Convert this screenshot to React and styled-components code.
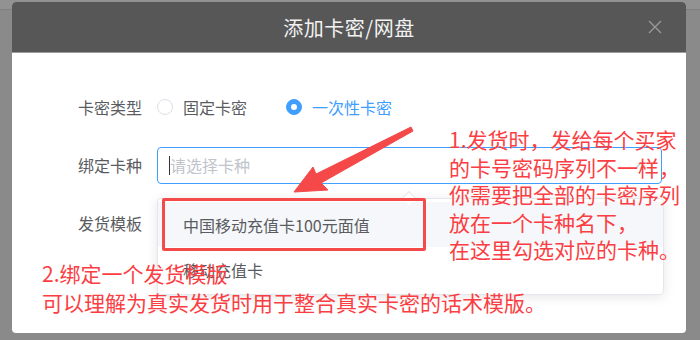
import React from "react";
import styled, { createGlobalStyle } from "styled-components";

const GlobalStyle = createGlobalStyle`
	html, body {
		margin: 0;
		width: 700px;
		height: 340px;
		overflow: hidden;
		background: linear-gradient(#929292 0 9px, #7f7f7f 9px 10px, #8a8a8a 10px);
		font-family: "Noto Sans CJK SC", "Noto Sans", sans-serif;
	}
`;

const Page = styled("div")`
	padding: 2px 14px 0 12px;
`;

const Modal = styled("div")`
	width: 674px;
	height: 331px;
	background: #fff;
	border-radius: 4px;
	overflow: hidden;
	display: flex;
	flex-direction: column;
`;

const Header = styled("div")`
	height: 50px;
	flex: none;
	background: #575757;
	border-bottom: 1px solid #9c9c9c;
	display: grid;
	grid-template-columns: 1fr auto 1fr;
	align-items: center;
`;

const Title = styled("h2")`
	grid-column: 2;
	margin: 0;
	font-size: 20px;
	font-weight: 400;
	color: #f2f2f2;
	letter-spacing: 0.5px;
`;

const Close = styled("span")`
	grid-column: 3;
	justify-self: end;
	margin-right: 24px;
	display: flex;
	color: #9a9a9a;
`;

const Body = styled("div")`
	position: relative;
	flex: 1;
	padding: 34px 24px 0 0;
	display: flex;
	flex-direction: column;
	gap: 18px;
`;

const FormRow = styled("div")`
	display: flex;
	align-items: center;
	height: 40px;
`;

const Label = styled("label")`
	width: 145px;
	flex: none;
	box-sizing: border-box;
	padding-right: 15px;
	text-align: right;
	font-size: 16px;
	color: #5a5c61;
`;

const RadioGroup = styled("div")`
	display: flex;
	align-items: center;
	gap: 39px;
`;

const Radio = styled("span")`
	display: flex;
	align-items: center;
	gap: 10px;
	font-size: 16px;
	color: ${(p) => (p.checked ? "#409eff" : "#5a5c61")};
`;

const Dot = styled("span")`
	width: 16px;
	height: 16px;
	box-sizing: border-box;
	border-radius: 50%;
	border: 1px solid ${(p) => (p.checked ? "#409eff" : "#dcdfe6")};
	background: ${(p) => (p.checked ? "#409eff" : "#fff")};
	display: flex;
	align-items: center;
	justify-content: center;

	&::after {
		content: "";
		width: 6px;
		height: 6px;
		border-radius: 50%;
		background: #fff;
		display: ${(p) => (p.checked ? "block" : "none")};
	}
`;

const SelectBox = styled("div")`
	flex: 1;
	height: 37px;
	box-sizing: border-box;
	border: 1px solid #409eff;
	border-radius: 4px;
	display: flex;
	align-items: center;
	padding: 0 14px 0 11px;
	font-size: 16px;
	color: #c0c4cc;
`;

const Caret = styled("span")`
	width: 1px;
	height: 19px;
	background: #333;
`;

const Placeholder = styled("span")`
	flex: 1;
`;

const Dropdown = styled("ul")`
	position: absolute;
	left: 145px;
	top: 145px;
	width: 507px;
	height: 97px;
	box-sizing: border-box;
	margin: 0;
	padding: 3px 0;
	list-style: none;
	background: #fff;
	border: 1px solid #e4e7ed;
	border-radius: 4px;
	box-shadow: 0 2px 12px rgba(0, 0, 0, 0.1);

	&::before {
		content: "";
		position: absolute;
		top: -6px;
		left: 246px;
		width: 9px;
		height: 9px;
		background: #fff;
		border-left: 1px solid #e4e7ed;
		border-top: 1px solid #e4e7ed;
		transform: rotate(45deg);
	}
`;

const Option = styled("li")`
	height: 45px;
	display: flex;
	align-items: center;
	padding: 0 25px;
	font-size: 16px;
	color: #5a5c61;
	background: ${(p) => (p.hover ? "#f5f7fa" : "transparent")};
`;

const RedBox = styled("div")`
	position: absolute;
	left: 150px;
	top: 145px;
	width: 264px;
	height: 53px;
	box-sizing: border-box;
	border: 3px solid #f44a4a;
	border-radius: 2px;
`;

const Note = styled("p")`
	position: absolute;
	left: ${(p) => p.left}px;
	top: ${(p) => p.top}px;
	margin: 0;
	font-size: 21px;
	line-height: ${(p) => p.lh}px;
	color: #fb3e43;
	white-space: nowrap;
`;

const ArrowSvg = styled("svg")`
	position: absolute;
	left: 0;
	top: 0;
	pointer-events: none;
`;

export default function App() {
	return (
		<>
			<GlobalStyle />
			<Page>
				<Modal>
					<Header>
						<Title>添加卡密/网盘</Title>
						<Close>
							<svg width="14" height="14" viewBox="0 0 14 14">
								<path d="M1 1L13 13M13 1L1 13" stroke="currentColor" strokeWidth="1.3" />
							</svg>
						</Close>
					</Header>
					<Body>
						<FormRow>
							<Label>卡密类型</Label>
							<RadioGroup>
								<Radio>
									<Dot />
									固定卡密
								</Radio>
								<Radio checked>
									<Dot checked />
									一次性卡密
								</Radio>
							</RadioGroup>
						</FormRow>
						<FormRow>
							<Label>绑定卡种</Label>
							<SelectBox>
								<Caret />
								<Placeholder>请选择卡种</Placeholder>
								<svg width="12" height="8" viewBox="0 0 12 8">
									<path d="M1 7L6 2L11 7" fill="none" stroke="#c0c4cc" strokeWidth="1.4" />
								</svg>
							</SelectBox>
						</FormRow>
						<FormRow>
							<Label>发货模板</Label>
						</FormRow>

						<Dropdown>
							<Option hover>中国移动充值卡100元面值</Option>
							<Option>移动充值卡</Option>
						</Dropdown>
						<RedBox />

						<Note left={437} top={73} lh={27.5}>
							1.发货时，发给每个买家
							<br />
							的卡号密码序列不一样，
							<br />
							你需要把全部的卡密序列
							<br />
							放在一个卡种名下，
							<br />
							在这里勾选对应的卡种。
						</Note>
						<Note left={30} top={206} lh={29}>
							2.绑定一个发货模版
							<br />
							可以理解为真实发货时用于整合真实卡密的话术模版。
						</Note>

						<ArrowSvg width="674" height="280" viewBox="12 53 674 280">
							<polygon
								points="294,192 328,190 321,183 413,131 411,127 316,174 313,167"
								fill="#f54848"
								strokeLinejoin="round"
								stroke="#f54848"
								strokeWidth="1"
							/>
						</ArrowSvg>
					</Body>
				</Modal>
			</Page>
		</>
	);
}
